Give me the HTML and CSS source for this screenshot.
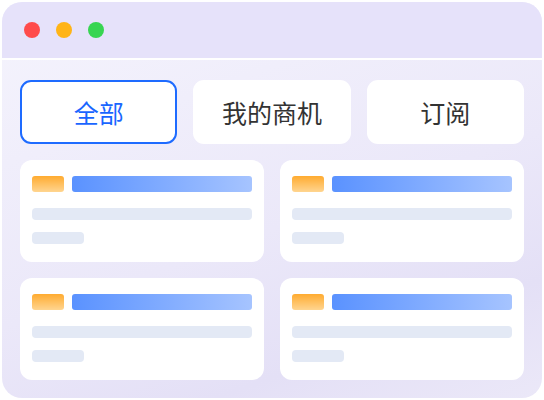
FILE: index.html
```html
<!DOCTYPE html>
<html lang="zh">
<head>
<meta charset="utf-8">
<link rel="stylesheet" href="styles.css">
</head>
<body>
<div class="window">
  <div class="titlebar">
    <span class="dot red"></span>
    <span class="dot yellow"></span>
    <span class="dot green"></span>
  </div>
  <div class="content">
    <div class="tabs">
      <div class="tab active">全部</div>
      <div class="tab">我的商机</div>
      <div class="tab">订阅</div>
    </div>
    <div class="cards">
      <div class="card">
        <div class="card-head"><span class="tag"></span><span class="bar"></span></div>
        <div class="line"></div>
        <div class="line short"></div>
      </div>
      <div class="card">
        <div class="card-head"><span class="tag"></span><span class="bar"></span></div>
        <div class="line"></div>
        <div class="line short"></div>
      </div>
      <div class="card">
        <div class="card-head"><span class="tag"></span><span class="bar"></span></div>
        <div class="line"></div>
        <div class="line short"></div>
      </div>
      <div class="card">
        <div class="card-head"><span class="tag"></span><span class="bar"></span></div>
        <div class="line"></div>
        <div class="line short"></div>
      </div>
    </div>
  </div>
</div>
</body>
</html>
```

FILE: styles.css
```css
html, body {
  margin: 0;
  padding: 0;
  background: #ffffff;
}
body {
  font-family: "Noto Sans CJK SC", "Noto Sans", sans-serif;
}
.window {
  margin: 2px;
  width: 540px;
  height: 396px;
  border-radius: 20px;
  overflow: hidden;
  display: flex;
  flex-direction: column;
  background: linear-gradient(160deg, #f5f4fd 0%, #ebe8f9 55%, #e4e0f6 80%, #ebe8f8 100%);
}
.titlebar {
  height: 56px;
  flex: none;
  background: #e6e2fa;
  border-bottom: 2px solid #ffffff;
  display: flex;
  align-items: center;
  gap: 16px;
  padding-left: 22px;
  box-sizing: content-box;
}
.dot {
  width: 16px;
  height: 16px;
  border-radius: 50%;
}
.red { background: #ff4b4b; }
.yellow { background: #ffb416; }
.green { background: #37d551; }
.content {
  padding: 20px 18px 18px;
  display: flex;
  flex-direction: column;
  gap: 16px;
}
.tabs {
  display: grid;
  grid-template-columns: 1fr 1fr 1fr;
  gap: 16px;
}
.tab {
  height: 64px;
  box-sizing: border-box;
  background: #ffffff;
  border-radius: 11px;
  display: flex;
  align-items: center;
  justify-content: center;
  font-size: 25px;
  line-height: 1;
  color: #333333;
}
.tab.active {
  border: 2px solid #1e6bff;
  color: #1a66ff;
}
.cards {
  display: grid;
  grid-template-columns: 1fr 1fr;
  gap: 16px;
}
.card {
  height: 102px;
  box-sizing: border-box;
  background: #ffffff;
  border-radius: 12px;
  padding: 16px 12px 0;
  display: flex;
  flex-direction: column;
}
.card-head {
  display: flex;
  gap: 8px;
  height: 16px;
}
.tag {
  width: 32px;
  height: 16px;
  border-radius: 3px;
  background: linear-gradient(180deg, #ffab30 0%, #ffd590 100%);
}
.bar {
  flex: 1;
  height: 16px;
  border-radius: 3px;
  background: linear-gradient(90deg, #5a92ff 0%, #a6c4ff 100%);
}
.line {
  height: 12px;
  border-radius: 4px;
  background: #e3e9f5;
  margin-top: 16px;
}
.line.short {
  width: 52px;
  margin-top: 12px;
}
```
